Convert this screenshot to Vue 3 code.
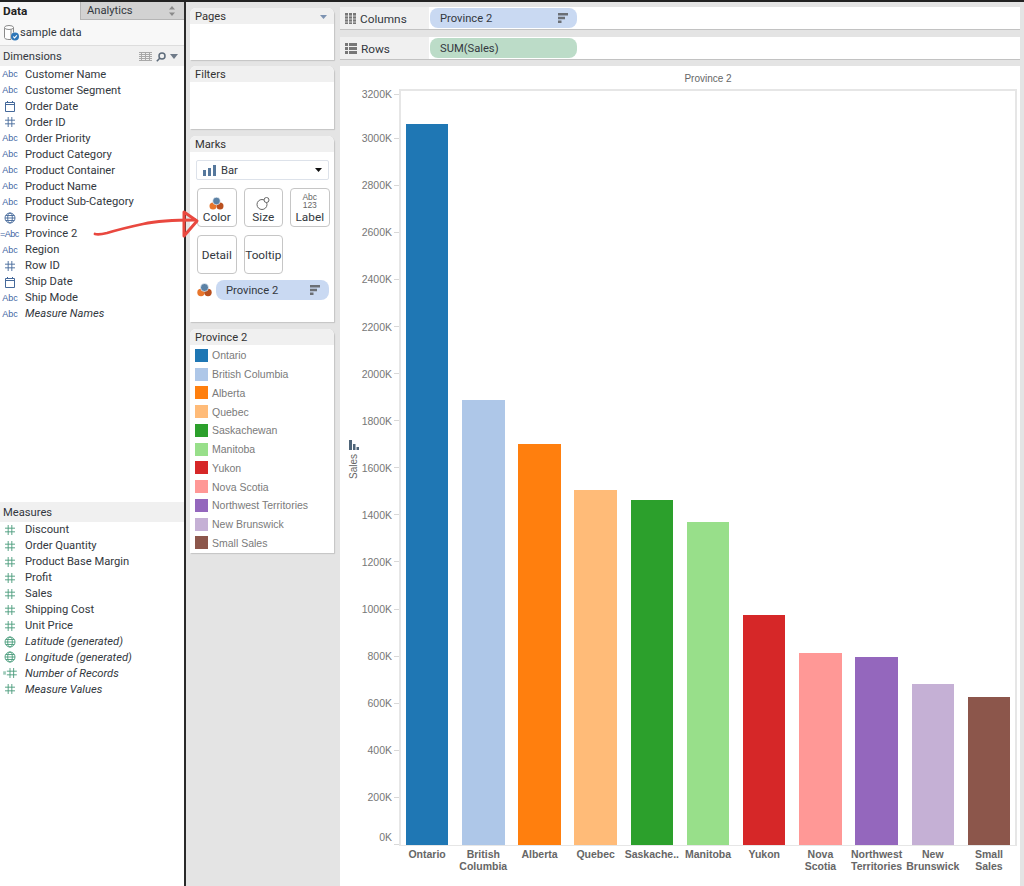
<script setup>
const dimensions = [
  { name: 'Customer Name', icon: 'abc' },
  { name: 'Customer Segment', icon: 'abc' },
  { name: 'Order Date', icon: 'date' },
  { name: 'Order ID', icon: 'hash' },
  { name: 'Order Priority', icon: 'abc' },
  { name: 'Product Category', icon: 'abc' },
  { name: 'Product Container', icon: 'abc' },
  { name: 'Product Name', icon: 'abc' },
  { name: 'Product Sub-Category', icon: 'abc' },
  { name: 'Province', icon: 'globe' },
  { name: 'Province 2', icon: 'calc' },
  { name: 'Region', icon: 'abc' },
  { name: 'Row ID', icon: 'hash' },
  { name: 'Ship Date', icon: 'date' },
  { name: 'Ship Mode', icon: 'abc' },
  { name: 'Measure Names', icon: 'abc', italic: true },
]
const measures = [
  { name: 'Discount', icon: 'hash' },
  { name: 'Order Quantity', icon: 'hash' },
  { name: 'Product Base Margin', icon: 'hash' },
  { name: 'Profit', icon: 'hash' },
  { name: 'Sales', icon: 'hash' },
  { name: 'Shipping Cost', icon: 'hash' },
  { name: 'Unit Price', icon: 'hash' },
  { name: 'Latitude (generated)', icon: 'globe', italic: true },
  { name: 'Longitude (generated)', icon: 'globe', italic: true },
  { name: 'Number of Records', icon: 'hashcalc', italic: true },
  { name: 'Measure Values', icon: 'hash', italic: true },
]
const bars = [
  { name: 'Ontario', legend: 'Ontario', color: '#1f77b4', height: 721 },
  { name: 'British Columbia', legend: 'British Columbia', color: '#aec7e8', height: 445 },
  { name: 'Alberta', legend: 'Alberta', color: '#ff7f0e', height: 401 },
  { name: 'Quebec', legend: 'Quebec', color: '#ffbb78', height: 355 },
  { name: 'Saskache..', legend: 'Saskachewan', color: '#2ca02c', height: 345 },
  { name: 'Manitoba', legend: 'Manitoba', color: '#98df8a', height: 323 },
  { name: 'Yukon', legend: 'Yukon', color: '#d62728', height: 230 },
  { name: 'Nova Scotia', legend: 'Nova Scotia', color: '#ff9896', height: 192 },
  { name: 'Northwest Territories', legend: 'Northwest Territories', color: '#9467bd', height: 188 },
  { name: 'New Brunswick', legend: 'New Brunswick', color: '#c5b0d5', height: 161 },
  { name: 'Small Sales', legend: 'Small Sales', color: '#8c564b', height: 148 },
]
const ticks = Array.from({ length: 17 }, (_, i) => `${(16 - i) * 200}K`)
</script>

<template>
  <div class="app">
    <aside class="sidebar">
      <div class="tabs">
        <div class="tab active">Data</div>
        <div class="tab inactive">
          <span>Analytics</span>
          <svg width="6" height="10" viewBox="0 0 6 10"><path d="M3 0 6 3.5H0zM3 10 0 6.5h6z" fill="#8a8a8a" /></svg>
        </div>
      </div>
      <div class="source">
        <svg width="17" height="18" viewBox="0 0 17 18">
          <path d="M1.5 3.5v10c0 1.2 2 2 4.500 2h2V3.500" fill="#fff" stroke="#8a8a8a" />
          <ellipse cx="6" cy="3.500" rx="4.500" ry="2" fill="#fff" stroke="#8a8a8a" />
          <path d="M10.500 3.500v5" stroke="#8a8a8a" fill="none" />
          <circle cx="12" cy="12.500" r="4" fill="#2e76b8" />
          <path d="M10.200 12.500l1.300 1.400 2.400-2.600" stroke="#fff" stroke-width="1.100" fill="none" />
        </svg>
        <span>sample data</span>
      </div>
      <div class="pane-header">
        <span>Dimensions</span>
        <span class="header-tools">
          <svg width="13" height="9" viewBox="0 0 13 9"><path d="M0 .5h13M0 2.500h13M0 4.500h13M0 6.500h13M0 8.500h13M2.500 0v9M6.500 0v9M10.500 0v9" stroke="#a8a8a8" stroke-width="1" fill="none" /></svg>
          <svg width="10" height="10" viewBox="0 0 10 10"><circle cx="6" cy="4" r="3" fill="none" stroke="#5d6b7a" stroke-width="1.500" /><path d="M4 6 .8 9.200" stroke="#5d6b7a" stroke-width="1.600" /></svg>
          <svg width="8" height="5" viewBox="0 0 8 5"><path d="M0 0h8L4 5z" fill="#6e7a88" /></svg>
        </span>
      </div>
      <ul class="fields dims">
        <li v-for="f in dimensions" :key="f.name" class="field" :class="{ italic: f.italic }">
          <span class="f-icon">
            <span v-if="f.icon === 'abc'" class="abc">Abc</span>
            <span v-else-if="f.icon === 'calc'" class="abc calc">=Abc</span>
            <svg v-else-if="f.icon === 'date'" width="12" height="12" viewBox="0 0 12 12"><path d="M1.500 2.500h9v9h-9zM1.500 4.500h9M3.500 1v2M8.500 1v2" fill="none" stroke="#45699a" /></svg>
            <svg v-else-if="f.icon === 'hash'" width="10" height="10" viewBox="0 0 11 11"><path d="M3.500 0v11M7.500 0v11M0 3.500h11M0 7.500h11" fill="none" stroke="#45699a" /></svg>
            <svg v-else-if="f.icon === 'globe'" width="12" height="12" viewBox="0 0 12 12"><g fill="none" stroke="#45699a" stroke-width=".9"><circle cx="6" cy="6" r="5" /><ellipse cx="6" cy="6" rx="2.300" ry="5" /><path d="M1 6h10M1.800 3.500h8.400M1.800 8.500h8.400" /></g></svg>
          </span>
          <span>{{ f.name }}</span>
        </li>
      </ul>
      <div class="pane-header">Measures</div>
      <ul class="fields">
        <li v-for="f in measures" :key="f.name" class="field" :class="{ italic: f.italic }">
          <span class="f-icon">
            <svg v-if="f.icon === 'hash'" width="10" height="10" viewBox="0 0 11 11"><path d="M3.500 0v11M7.500 0v11M0 3.500h11M0 7.500h11" fill="none" stroke="#4a9c7c" /></svg>
            <svg v-else-if="f.icon === 'hashcalc'" width="14" height="10" viewBox="0 0 15 11"><path d="M7.500 0v11M11.500 0v11M4 3.500h11M4 7.500h11M0 4.500h3M0 6.500h3" fill="none" stroke="#4a9c7c" /></svg>
            <svg v-else width="12" height="12" viewBox="0 0 12 12"><g fill="none" stroke="#4a9c7c" stroke-width=".9"><circle cx="6" cy="6" r="5" /><ellipse cx="6" cy="6" rx="2.300" ry="5" /><path d="M1 6h10M1.800 3.500h8.400M1.800 8.500h8.400" /></g></svg>
          </span>
          <span>{{ f.name }}</span>
        </li>
      </ul>
    </aside>

    <section class="cards">
      <div class="card pages">
        <div class="card-header">
          <span>Pages</span>
          <svg width="7" height="4" viewBox="0 0 7 4"><path d="M0 0h7L3.500 4z" fill="#7d93b2" /></svg>
        </div>
      </div>
      <div class="card filters">
        <div class="card-header">Filters</div>
      </div>
      <div class="card marks">
        <div class="card-header">Marks</div>
        <div class="mark-select">
          <svg width="13" height="11" viewBox="0 0 13 11"><path d="M0 5h3v6H0zM5 3h3v8H5zM10 0h3v11h-3z" fill="#56789c" /></svg>
          <span>Bar</span>
          <svg class="caret" width="7" height="4" viewBox="0 0 7 4"><path d="M0 0h7L3.500 4z" fill="#111" /></svg>
        </div>
        <div class="mark-grid">
          <div class="mark-btn">
            <svg width="15" height="13" viewBox="0 0 15 13"><circle cx="4" cy="9" r="3.500" fill="#e8762c" /><circle cx="11" cy="9" r="3.500" fill="#b9501f" /><circle cx="7.500" cy="4" r="3.800" fill="#5b81a5" stroke="#fff" stroke-width=".6" /></svg>
            <span>Color</span>
          </div>
          <div class="mark-btn">
            <svg width="15" height="13" viewBox="0 0 15 13"><circle cx="6" cy="7.500" r="5" fill="none" stroke="#666" /><circle cx="10.500" cy="3" r="2.500" fill="#fff" stroke="#666" /></svg>
            <span>Size</span>
          </div>
          <div class="mark-btn">
            <span class="abc123">Abc<br />123</span>
            <span>Label</span>
          </div>
          <div class="mark-btn plain">Detail</div>
          <div class="mark-btn plain">Tooltip</div>
        </div>
        <div class="mark-pill-row">
          <svg width="15" height="14" viewBox="0 0 15 14"><circle cx="4" cy="9.500" r="3.700" fill="#e8762c" /><circle cx="11" cy="9.500" r="3.700" fill="#b9501f" /><circle cx="7.500" cy="4.500" r="4" fill="#5b81a5" stroke="#fff" stroke-width=".6" /></svg>
          <div class="pill blue grow">
            <span>Province 2</span>
            <svg width="10" height="10" viewBox="0 0 10 10"><path d="M0 0h10v2.500H0zM0 3.800h7v2.500H0zM0 7.500h3.500V10H0z" fill="#6b6f75" /></svg>
          </div>
        </div>
      </div>
      <div class="card legend">
        <div class="card-header">Province 2</div>
        <ul class="legend-list">
          <li v-for="b in bars" :key="b.legend" class="legend-item">
            <span class="swatch" :style="{ background: b.color }"></span>
            <span>{{ b.legend }}</span>
          </li>
        </ul>
      </div>
    </section>

    <main class="view">
      <div class="shelf">
        <div class="shelf-label">
          <svg width="11" height="11" viewBox="0 0 11 11"><path d="M0 0h3v11H0zM4 0h3v11H4zM8 0h3v11H8z" fill="#777" /><path d="M0 3h11M0 6h11M0 9h11" stroke="#f0f0f0" stroke-width=".7" /></svg>
          <span>Columns</span>
        </div>
        <div class="pill blue shelf-pill">
          <span>Province 2</span>
          <svg width="10" height="10" viewBox="0 0 10 10"><path d="M0 0h10v2.500H0zM0 3.800h7v2.500H0zM0 7.500h3.500V10H0z" fill="#6b6f75" /></svg>
        </div>
      </div>
      <div class="shelf">
        <div class="shelf-label">
          <svg width="12" height="11" viewBox="0 0 12 11"><path d="M0 0h3v3H0zM4 0h8v3H4zM0 4h3v3H0zM4 4h8v3H4zM0 8h3v3H0zM4 8h8v3H4z" fill="#777" /></svg>
          <span>Rows</span>
        </div>
        <div class="pill green shelf-pill">SUM(Sales)</div>
      </div>
      <div class="viz">
        <div class="viz-title">Province 2</div>
        <div class="chart">
          <div class="axis-title">
            <svg width="10" height="10" viewBox="0 0 10 10"><path d="M0 0h3v10H0zM4 4h2.500v6H4zM7.500 7H10v3H7.500z" fill="#4f6579" /></svg>
            <span class="sales">Sales</span>
          </div>
          <div class="y-axis">
            <div v-for="t in ticks" :key="t" class="y-tick" :class="{ top: t === '3200K' }">
              <span class="y-label" :class="{ zero: t === '0K' }">{{ t }}</span>
              <span class="tick-mark"></span>
            </div>
          </div>
          <div class="plot-wrap">
            <div class="plot">
              <div v-for="b in bars" :key="b.name" class="bar-cell">
                <div class="bar" :style="{ height: b.height + 'px', background: b.color }"></div>
              </div>
            </div>
            <div class="x-axis">
              <div v-for="b in bars" :key="b.name" class="x-label">{{ b.name }}</div>
            </div>
          </div>
        </div>
      </div>
    </main>

    <svg class="arrow" width="120" height="40" viewBox="90 205 120 40">
      <path d="M95 234c4 1 8 0 12-1 10-3 22-6 36-9 14-3 26-4 52-4" fill="none" stroke="#e9483f" stroke-width="2.800" stroke-linecap="round" />
      <path d="M184 212v24l13-15z" fill="none" stroke="#e9483f" stroke-width="3" stroke-linejoin="round" />
    </svg>
  </div>
</template>

<style>
html, body { margin: 0; padding: 0; }
</style>

<style scoped>
* { box-sizing: border-box; }
ul { list-style: none; margin: 0; padding: 0; }
.app {
  position: relative;
  display: flex;
  width: 1024px;
  height: 886px;
  overflow: hidden;
  background: #e4e4e4;
  border-top: 2px solid #222;
  font-family: Roboto, "Liberation Sans", sans-serif;
  font-size: 11.200px;
  color: #333840;
}
.sidebar {
  width: 186px;
  flex: none;
  background: #fff;
  border-right: 2px solid #2a2a2a;
}
.tabs { display: flex; height: 18px; }
.tab { display: flex; align-items: center; }
.tab.active { width: 80px; padding-left: 3px; font-size: 11.800px; font-weight: 700; background: #f6f6f6; color: #222; }
.tab.inactive {
  flex: 1;
  justify-content: space-between;
  padding: 0 9px 0 6px;
  background: #d2d2d2;
  border-left: 1px solid #b5b5b5;
  border-bottom: 1px solid #b5b5b5;
}
.source {
  display: flex;
  align-items: center;
  gap: 0;
  height: 26px;
  padding-left: 3px;
  border-bottom: 1px solid #ddd;
  background: #f8f8f8;
}
.pane-header {
  display: flex;
  align-items: center;
  justify-content: space-between;
  height: 20px;
  padding: 1px 4px 0 3px;
  background: #f0f0f0;
}
.header-tools { display: flex; align-items: center; gap: 4px; padding-right: 2px; }
.dims { height: 436px; padding-top: 0.500px; }
.field { display: flex; align-items: center; height: 15.950px; }
.field.italic { font-style: italic; }
.f-icon {
  display: flex;
  align-items: center;
  justify-content: center;
  width: 25px;
  flex: none;
  padding-right: 5px;
}
.abc { font-family: "Liberation Sans", sans-serif; font-size: 9px; color: #3f66a3; font-style: normal; }
.calc { margin-left: -1px; letter-spacing: -0.5px; }

.cards {
  width: 144px;
  flex: none;
  display: flex;
  flex-direction: column;
  margin: 6px 0 0 4px;
}
.card {
  background: #fff;
  border-radius: 6px 6px 0 0;
  box-shadow: 1px 1px 1px #c4c4c4;
}
.card-header {
  display: flex;
  align-items: center;
  justify-content: space-between;
  height: 16px;
  padding: 1px 7px 0 5px;
  background: #f0f0f0;
  border-radius: 6px 6px 0 0;
  color: #333;
}
.pages { height: 52px; margin-bottom: 6px; }
.filters { height: 63px; margin-bottom: 7px; }
.marks { height: 186px; margin-bottom: 7px; }
.legend { height: 224px; }
.mark-select {
  display: flex;
  align-items: center;
  gap: 5px;
  height: 20px;
  margin: 8px 5px 0 6px;
  padding: 0 6px;
  border: 1px solid #dde2ea;
  border-radius: 2px;
}
.caret { margin-left: auto; }
.mark-grid {
  display: grid;
  grid-template-columns: repeat(3, 39.500px);
  grid-auto-rows: 39px;
  gap: 8px 7px;
  margin: 8px 0 0 7px;
}
.mark-btn {
  display: flex;
  flex-direction: column;
  align-items: center;
  justify-content: flex-end;
  padding-bottom: 2px;
  border: 1px solid #c6c6c6;
  border-radius: 4px;
  background: #fff;
  font-size: 11.800px;
}
.mark-btn.plain { justify-content: center; padding-bottom: 0; }
.abc123 { font-family: "Liberation Sans", sans-serif; font-size: 8.500px; line-height: 8px; text-align: center; color: #666; margin-bottom: 1px; }
.mark-pill-row { display: flex; align-items: center; gap: 4px; margin: 6px 5px 0 7px; }
.pill {
  display: flex;
  align-items: center;
  justify-content: space-between;
  height: 20px;
  padding: 0 9px 0 10px;
  border-radius: 8px;
}
.pill.grow { flex: 1; }
.blue { background: #c9d9f2; }
.green { background: #bcdcc8; }
.legend-list { padding-top: 1px; }
.legend-item {
  display: flex;
  align-items: center;
  gap: 4px;
  height: 18.750px;
  padding-left: 5px;
  font-family: "Liberation Sans", sans-serif;
  font-size: 10.500px;
  color: #7a7a7a;
}
.swatch { width: 13px; height: 13px; flex: none; }

.view {
  width: 680px;
  flex: none;
  display: flex;
  flex-direction: column;
  margin: 5px 0 0 6px;
}
.shelf {
  display: flex;
  align-items: center;
  height: 23px;
  margin-bottom: 7px;
  background: #fff;
  border-bottom: 1px solid #c2c2c2;
}
.shelf + .shelf { margin-bottom: 6px; }
.shelf-label {
  display: flex;
  align-items: center;
  gap: 4px;
  width: 89px;
  height: 100%;
  padding: 1px 0 0 5px;
  background: #f0f0f0;
  font-size: 11.800px;
}
.shelf-pill { width: 147px; margin-left: 1px; }
.viz { flex: 1; display: flex; flex-direction: column; background: #fff; }
.viz-title {
  height: 23px;
  padding: 7px 0 0 56px;
  text-align: center;
  font-family: "Liberation Sans", sans-serif;
  font-size: 10px;
  color: #666;
  line-height: 12px;
}
.chart { flex: 1; display: flex; }
.axis-title {
  width: 27px;
  flex: none;
  display: flex;
  flex-direction: column;
  align-items: center;
  padding-top: 351px;
  gap: 4px;
}
.sales {
  writing-mode: vertical-rl;
  transform: rotate(180deg);
  font-family: "Liberation Sans", sans-serif;
  font-size: 10px;
  color: #666;
}
.y-axis { width: 32px; flex: none; margin-top: -21.500px; }
.y-tick {
  display: flex;
  align-items: center;
  justify-content: flex-end;
  height: 47.100px;
  font-family: "Liberation Sans", sans-serif;
  font-size: 10.500px;
  color: #777;
}
.y-tick.top { transform: translateY(3px); }
.y-label { position: relative; margin-right: 2px; }
.y-label.zero { top: -8px; }
.tick-mark { width: 5px; height: 1px; background: #d8d8d8; flex: none; }
.plot-wrap { width: 618px; flex: none; }
.plot {
  display: flex;
  align-items: flex-end;
  height: 757px;
  box-shadow: inset 2px 2px 0 #e6e6e6, inset -2px -1px 0 #e6e6e6;
}
.bar-cell { flex: 1; display: flex; justify-content: center; align-items: flex-end; padding-bottom: 1px; }
.bar { width: 42.500px; flex: none; }
.x-axis { display: flex; margin-top: 2px; }
.x-label {
  flex: 1 1 0;
  min-width: 0;
  text-align: center;
  font-family: "Liberation Sans", sans-serif;
  font-size: 10.500px;
  font-weight: 700;
  line-height: 12px;
  color: #666;
}
.arrow { position: absolute; left: 90px; top: 203px; }
</style>
